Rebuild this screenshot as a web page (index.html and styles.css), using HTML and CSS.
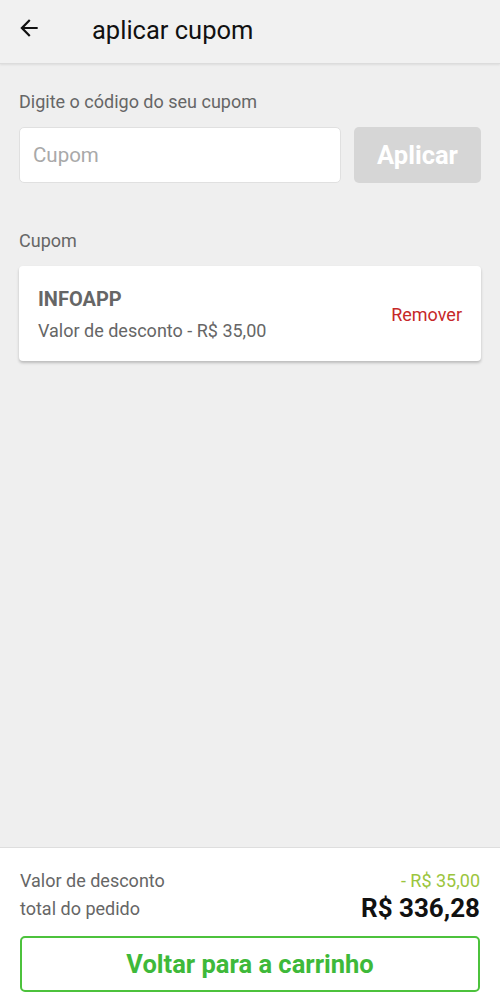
FILE: index.html
```html
<!DOCTYPE html>
<html>
<head>
    <title>aplicar cupom</title>
    <link rel="stylesheet" href="styles.css">
</head>
<body>
    <div class="screen">
        <header class="topbar">
            <svg class="back" width="26" height="26" viewBox="0 0 24 24">
                <path d="M20 11H7.83l5.59-5.59L12 4l-8 8 8 8 1.41-1.41L7.83 13H20v-2z" fill="#111"/>
            </svg>
            <h1>aplicar cupom</h1>
        </header>

        <main class="content">
            <p class="label">Digite o código do seu cupom</p>
            <div class="code-row">
                <input class="code-input" type="text" placeholder="Cupom">
                <button class="apply-btn" disabled>Aplicar</button>
            </div>

            <p class="label section">Cupom</p>
            <div class="coupon-card">
                <div class="coupon-info">
                    <div class="coupon-name">INFOAPP</div>
                    <div class="coupon-value">Valor de desconto - R$ 35,00</div>
                </div>
                <span class="remove">Remover</span>
            </div>
        </main>

        <footer class="summary">
            <div class="summary-row">
                <span>Valor de desconto</span>
                <span class="discount">- R$ 35,00</span>
            </div>
            <div class="summary-row total-row">
                <span>total do pedido</span>
                <span class="total">R$ 336,28</span>
            </div>
            <button class="back-btn">Voltar para a carrinho</button>
        </footer>
    </div>
</body>
</html>
```

FILE: styles.css
```css
* {
    box-sizing: border-box;
}
body {
    margin: 0;
    font-family: Roboto, "Liberation Sans", sans-serif;
    background: #efefef;
}
.screen {
    height: 1004px;
    display: flex;
    flex-direction: column;
}
.topbar {
    height: 64px;
    display: flex;
    align-items: center;
    padding: 0 16px;
    background: #f1f1f1;
    border-bottom: 1px solid #dcdcdc;
    box-shadow: 0 1px 2px rgba(0,0,0,0.08);
}
.back {
    margin-top: -7px;
}
.topbar h1 {
    margin: -4px 0 0 50px;
    font-size: 25.5px;
    font-weight: 400;
    color: #111;
}
.content {
    flex: 1;
    padding: 0 19px;
}
.label {
    margin: 27px 0 0;
    font-size: 18px;
    line-height: 22px;
    color: #666;
}
.label.section {
    margin-top: 47px;
}
.code-row {
    display: flex;
    gap: 13px;
    margin-top: 14px;
}
.code-input {
    flex: 1;
    height: 56px;
    border: 1px solid #e0e0e0;
    border-radius: 5px;
    background: #fff;
    padding: 0 13px;
    font-family: inherit;
    font-size: 20.5px;
    color: #333;
}
.code-input::placeholder {
    color: #a9a9a9;
}
.apply-btn {
    width: 127px;
    height: 56px;
    border: none;
    border-radius: 5px;
    background: #d6d6d6;
    color: #fff;
    font-family: inherit;
    font-size: 25.5px;
    font-weight: 700;
}
.coupon-card {
    margin-top: 14px;
    height: 95px;
    background: #fff;
    border-radius: 4px;
    box-shadow: 0 2px 3px rgba(0,0,0,0.22);
    display: flex;
    align-items: center;
    justify-content: space-between;
    padding: 0 19px;
}
.coupon-name {
    font-size: 20px;
    line-height: 24px;
    font-weight: 700;
    color: #666;
    margin-top: 2px;
}
.coupon-value {
    font-size: 18px;
    line-height: 22px;
    color: #666;
    margin-top: 9px;
}
.remove {
    font-size: 18px;
    color: #c62828;
    margin-top: 2px;
}
.summary {
    background: #fff;
    border-top: 1px solid #dedede;
    padding: 21px 20px 12px 20px;
}
.summary-row {
    display: flex;
    justify-content: space-between;
    align-items: center;
    font-size: 18px;
    color: #666;
    height: 22px;
}
.discount {
    color: #9bc53d;
}
.total-row {
    height: 28px;
    margin-top: 3px;
}
.total {
    font-size: 26px;
    font-weight: 700;
    color: #111;
}
.back-btn {
    display: block;
    width: 100%;
    height: 56px;
    margin-top: 14px;
    background: #fff;
    border: 2px solid #4cc23c;
    border-radius: 5px;
    color: #3eb93a;
    font-family: inherit;
    font-size: 25.5px;
    font-weight: 700;
}
```
